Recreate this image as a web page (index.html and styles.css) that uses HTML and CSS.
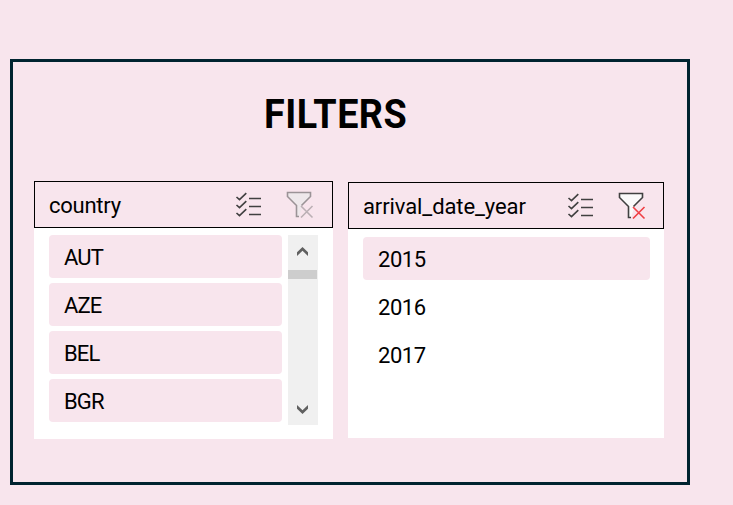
FILE: index.html
```html
<!DOCTYPE html>
<html lang="en">
<head>
<meta charset="utf-8">
<title>Filters</title>
<link rel="stylesheet" href="styles.css">
</head>
<body>
<svg class="defs" aria-hidden="true">
  <symbol id="checklist" viewBox="0 0 28 28">
    <path class="ink" d="M1.5 6 4.5 8.7 11.3 2.2M1.5 14 4.5 16.7 11.3 10.2M1.5 22 4.5 24.7 11.3 18.2M14 7.5H26M14 15.5H26M14 23.5H26"/>
  </symbol>
  <symbol id="funnel" viewBox="0 0 28 28">
    <path class="cone" d="M1.5 1.5H24.5V5.5L15.5 14.5V18L13 25.5H10.5V14.5L1.5 5.5Z"/>
    <path class="outline" d="M15.5 14.5 24.5 5.5V1.5H1.5V5.5L10.5 14.5V25.5H13"/>
    <path class="cross" d="M15 15 26.5 26.5M26.5 15 15 26.5"/>
  </symbol>
</svg>
<main class="frame">
  <h1 class="title">FILTERS</h1>
  <div class="slicers">
    <section class="slicer country">
      <header class="head">
        <span class="name">country</span>
        <svg class="icon"><use href="#checklist"/></svg>
        <svg class="icon clear disabled"><use href="#funnel"/></svg>
      </header>
      <div class="body">
        <ul class="items">
          <li class="item selected">AUT</li>
          <li class="item selected">AZE</li>
          <li class="item selected">BEL</li>
          <li class="item selected">BGR</li>
        </ul>
        <div class="scrollbar">
          <svg class="arrow" viewBox="0 0 11 9"><path d="M0 5.2 5.5 0 11 5.2V9L5.5 3.8 0 9Z"/></svg>
          <div class="thumb"></div>
          <svg class="arrow down" viewBox="0 0 11 9"><path d="M0 0 5.5 5.2 11 0V3.8L5.5 9 0 3.8Z"/></svg>
        </div>
      </div>
    </section>
    <section class="slicer year">
      <header class="head">
        <span class="name">arrival_date_year</span>
        <svg class="icon"><use href="#checklist"/></svg>
        <svg class="icon clear"><use href="#funnel"/></svg>
      </header>
      <div class="body">
        <ul class="items">
          <li class="item selected">2015</li>
          <li class="item">2016</li>
          <li class="item">2017</li>
        </ul>
      </div>
    </section>
  </div>
</main>
</body>
</html>
```
FILE: styles.css
```css
* { box-sizing: border-box; }
body {
  margin: 0;
  padding: 59px 0 0 10px;
  height: 505px;
  overflow: hidden;
  background: #f8e5ed;
  color: #000;
  font: 22px/43px Roboto, "Liberation Sans", sans-serif;
}
.defs { display: none; }
.frame {
  width: 680px;
  height: 426px;
  border: 3px solid #00232f;
  padding: 28px 0 0 21px;
}
.title {
  margin: 0 0 0 230px;
  height: 91px;
  font-size: 41px;
  line-height: 48px;
  font-weight: 700;
  letter-spacing: 0.5px;
  transform: scaleX(0.92);
  transform-origin: left;
}
.slicers { display: flex; gap: 15px; align-items: flex-start; }
.slicer { background: #fff; }
.country { width: 299px; height: 258px; }
.year { width: 316px; height: 256px; margin-top: 1px; }
.head {
  display: flex;
  height: 47px;
  border: 1px solid #000;
  background: #f8e5ed;
  padding: 9px 17px 0 14px;
}
.name { flex: 1; line-height: 30px; letter-spacing: -0.1px; }
.country .name { letter-spacing: -0.25px; }
.icon {
  width: 28px;
  height: 28px;
  flex: none;
  fill: none;
  stroke: #404040;
  stroke-width: 1.6;
  --cone: #fafafa;
  --outline: #404040;
  --cross: #ef3f45;
}
.clear { margin-left: 23px; }
.country .head { padding-right: 18px; }
.disabled { --cone: #eee8eb; --outline: #9b9397; --cross: #bbb0b5; }
.cone { fill: var(--cone); stroke: none; }
.outline { stroke: var(--outline); }
.cross { stroke: var(--cross); }
.body { display: flex; gap: 6px; padding: 7px 15px 0; }
.year .body { padding: 8px 14px 0 15px; }
.items {
  flex: 1;
  display: flex;
  flex-direction: column;
  gap: 5px;
  margin: 0;
  padding: 0;
  list-style: none;
}
.item { height: 43px; padding: 1px 15px; border-radius: 4px; letter-spacing: -0.45px; }
.country .item { letter-spacing: -0.9px; }
.selected { background: #f8e5ed; }
.scrollbar {
  display: flex;
  flex-direction: column;
  width: 30px;
  height: 190px;
  padding-top: 12px;
  background: #f0f0f0;
}
.arrow { width: 11px; height: 9px; margin-left: 9px; fill: #606060; }
.thumb { width: 29px; height: 9px; margin-top: 14px; background: #cdcdcd; }
.down { margin: auto 0 11px 9px; }
```
